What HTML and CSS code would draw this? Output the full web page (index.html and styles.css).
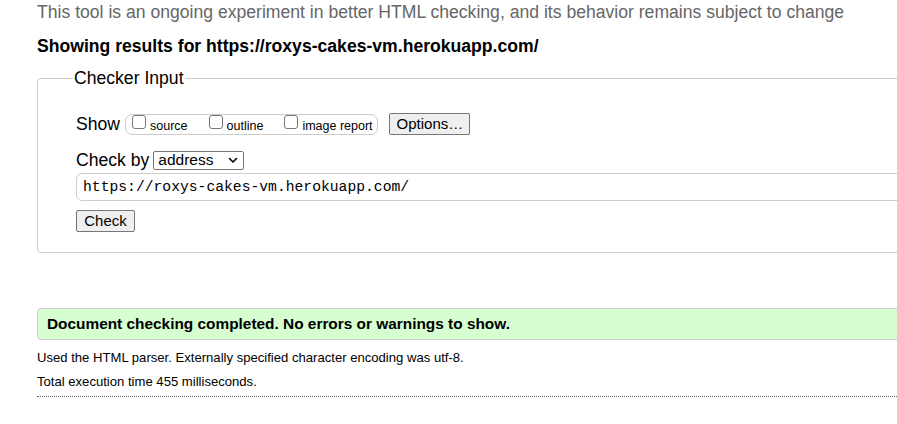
FILE: index.html
```html
<!DOCTYPE html>
<html>
<head>
<meta charset="utf-8">
<link rel="stylesheet" href="styles.css">
</head>
<body>
<div class="page">
  <p class="note">This tool is an ongoing experiment in better HTML checking, and its behavior remains subject to change</p>
  <p class="results-for">Showing results for https://roxys-cakes-vm.herokuapp.com/</p>
  <fieldset class="checker">
    <legend>Checker Input</legend>
    <div class="row show-row">
      <span class="lbl">Show</span>
      <fieldset class="show-group">
        <label class="opt"><span class="cb"></span>source</label>
        <label class="opt"><span class="cb"></span>outline</label>
        <label class="opt"><span class="cb"></span>image report</label>
      </fieldset>
      <button class="btn options">Options…</button>
    </div>
    <div class="row by-row">
      <span class="lbl">Check by</span>
      <span class="select">address<svg width="10" height="7" viewBox="0 0 10 7"><path d="M1.5 1.5 L5 5 L8.5 1.5" fill="none" stroke="#000" stroke-width="1.6" stroke-linecap="round" stroke-linejoin="round"/></svg></span>
    </div>
    <div class="url">https://roxys-cakes-vm.herokuapp.com/</div>
    <button class="btn check">Check</button>
  </fieldset>
  <div class="success">Document checking completed. No errors or warnings to show.</div>
  <p class="details first">Used the HTML parser. Externally specified character encoding was utf-8.</p>
  <p class="details">Total execution time 455 milliseconds.</p>
  <div class="dotted"></div>
</div>
</body>
</html>
```

FILE: styles.css
```css
html, body {
  margin: 0;
  padding: 0;
  overflow: hidden;
  background: #fff;
}
body {
  font-family: "Liberation Sans", Arial, sans-serif;
  color: #000;
}
.page {
  width: 900px;
  padding-left: 37px;
}
.note {
  margin: 0;
  padding-top: 2px;
  font-size: 17.6px;
  line-height: 20px;
  color: #666;
}
.results-for {
  margin: 14px 0 0 0;
  font-size: 17.6px;
  line-height: 20px;
  font-weight: bold;
}
.checker {
  margin: 12px 0 0 0;
  border: 1px solid #ccc;
  border-radius: 4px;
  padding: 12px 38px 20px 38px;
  min-width: 0;
}
.checker legend {
  font-size: 17.6px;
  padding: 0 1px;
  margin-left: -3px;
  line-height: 20px;
}
.row {
  display: flex;
  align-items: center;
}
.lbl {
  font-size: 17.6px;
}
.show-row {
  margin-top: 12px;
  height: 24px;
}
.show-group {
  display: flex;
  margin: 0 0 0 5px;
  padding: 0 4px 0 6px;
  border: 1px solid #ccc;
  border-radius: 7px;
  height: 19px;
  align-items: center;
  min-width: 0;
}
.opt {
  display: flex;
  align-items: center;
  font-size: 12.5px;
  margin-right: 21px;
  padding-top: 3px;
}
.opt:last-child { margin-right: 0; }
.cb {
  box-sizing: border-box;
  width: 14px;
  height: 14px;
  border: 1px solid #777;
  border-radius: 3px;
  margin-right: 4px;
  margin-top: -7px;
  background: #fff;
}
.btn {
  font-family: "Liberation Sans", Arial, sans-serif;
  font-size: 15px;
  background: #efefef;
  border: 1px solid #767676;
  border-radius: 2px;
  color: #000;
  padding: 0 7px;
  height: 22px;
  line-height: 20px;
}
.options {
  margin-left: 11px;
  width: 81px;
}
.by-row {
  margin-top: 14px;
  height: 20px;
}
.select {
  display: flex;
  align-items: center;
  justify-content: space-between;
  margin-left: 4px;
  width: 80px;
  height: 17px;
  border: 1px solid #767676;
  border-radius: 2px;
  padding: 0 5px 0 4px;
  font-size: 15.5px;
}
.url {
  margin-top: 3px;
  width: 900px;
  height: 26px;
  border: 1px solid #ccc;
  border-radius: 6px;
  padding-left: 6px;
  font-family: "Liberation Mono", "DejaVu Sans Mono", monospace;
  font-size: 14.7px;
  line-height: 26px;
}
.check {
  margin-top: 9px;
  width: 59px;
  padding: 0;
  display: block;
}
.success {
  margin-top: 55px;
  background: #d6fed0;
  border: 1px solid #ccc;
  border-radius: 4px 0 0 4px;
  height: 30px;
  line-height: 30px;
  padding-left: 9px;
  font-size: 15.4px;
  font-weight: bold;
}
.details {
  margin: 0;
  font-size: 13.1px;
  line-height: 24px;
}
.details.first { margin-top: 6px; }
.dotted {
  margin-top: 2px;
  border-top: 1px dotted #666;
}
```
